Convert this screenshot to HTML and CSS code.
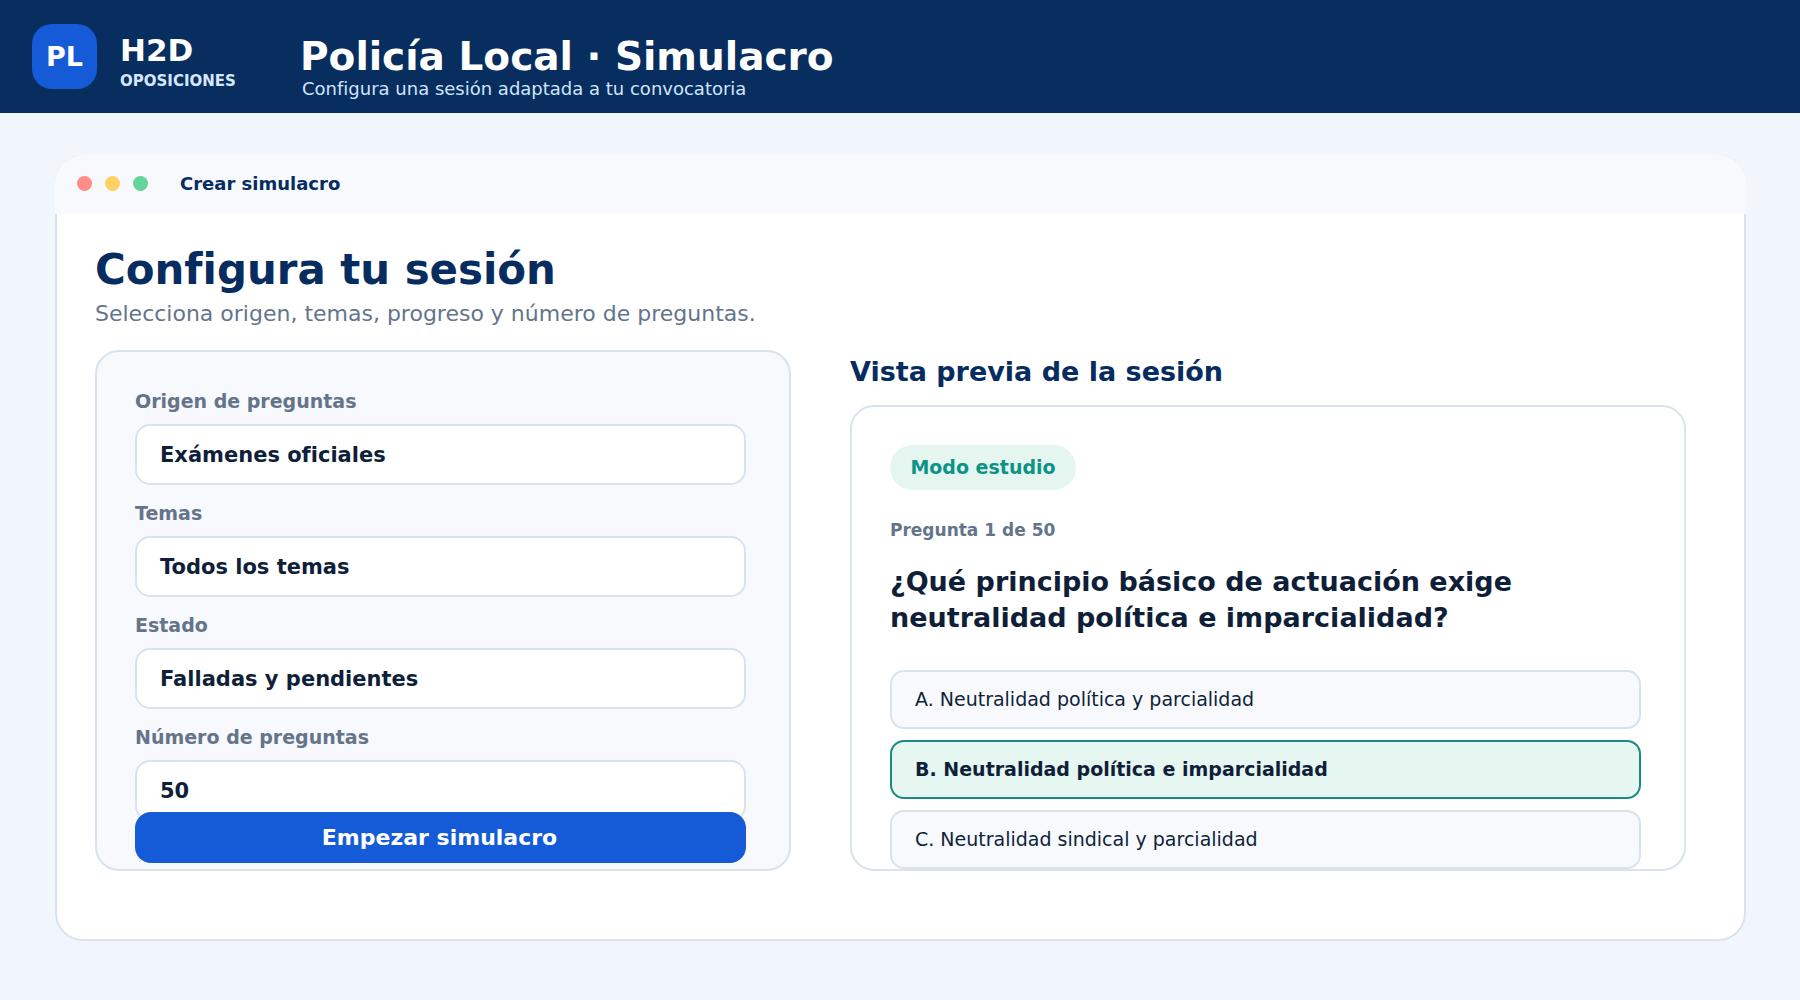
FILE: index.html
```html
<!DOCTYPE html>
<html lang="es">
<head>
  <meta charset="UTF-8">
  <title>Policía Local · Simulacro</title>
  <meta name="viewport" content="width=device-width, initial-scale=1.0">
  <link rel="stylesheet" href="styles.css">
</head>
<body>
  <header class="topbar">
    <div class="logo">PL</div>
    <div class="brand">
      <div class="brand-name">H2D</div>
      <div class="brand-sub">OPOSICIONES</div>
    </div>
    <div class="heading">
      <h1>Policía Local · Simulacro</h1>
      <p>Configura una sesión adaptada a tu convocatoria</p>
    </div>
  </header>

  <main class="window">
    <div class="titlebar">
      <span class="dot red"></span>
      <span class="dot yellow"></span>
      <span class="dot green"></span>
      <span class="titlebar-text">Crear simulacro</span>
    </div>

    <div class="content">
      <h2>Configura tu sesión</h2>
      <p class="lead">Selecciona origen, temas, progreso y número de preguntas.</p>

      <div class="columns">
        <section class="config">
          <div class="label">Origen de preguntas</div>
          <div class="field">Exámenes oficiales</div>
          <div class="label">Temas</div>
          <div class="field">Todos los temas</div>
          <div class="label">Estado</div>
          <div class="field">Falladas y pendientes</div>
          <div class="label">Número de preguntas</div>
          <div class="field">50</div>
          <button class="start">Empezar simulacro</button>
        </section>

        <section class="preview">
          <h3>Vista previa de la sesión</h3>
          <div class="card">
            <span class="chip">Modo estudio</span>
            <div class="counter">Pregunta 1 de 50</div>
            <p class="question">¿Qué principio básico de actuación exige<br>neutralidad política e imparcialidad?</p>
            <div class="option">A. Neutralidad política y parcialidad</div>
            <div class="option selected">B. Neutralidad política e imparcialidad</div>
            <div class="option">C. Neutralidad sindical y parcialidad</div>
          </div>
        </section>
      </div>
    </div>
  </main>
</body>
</html>
```

FILE: styles.css
```css
* {
  box-sizing: border-box;
}

body {
  margin: 0;
  height: 1000px;
  background: #f1f6fd;
  color: #0f1f3a;
  font-family: 'DejaVu Sans', sans-serif;
  font-variant-ligatures: common-ligatures;
  overflow: hidden;
}

h1, h2, h3, p {
  margin: 0;
}

/* header */
.topbar {
  display: flex;
  height: 113px;
  padding: 24px 32px 0;
  background: #082d5f;
  color: #fff;
}

.logo {
  width: 65px;
  height: 65px;
  border-radius: 20px;
  background: #155bd8;
  font-size: 27px;
  font-weight: bold;
  line-height: 65px;
  text-align: center;
}

.brand {
  width: 181px;
  margin-left: 23px;
  padding-top: 6px;
  font-weight: bold;
}

.brand-name {
  font-size: 31px;
  line-height: 40px;
}

.brand-sub {
  margin-top: 1px;
  font-size: 15px;
  line-height: 20px;
  color: #d6e8fc;
}

.heading {
  padding-top: 8px;
}

.heading h1 {
  margin-left: -1px;
  font-size: 39px;
  line-height: 50px;
  white-space: nowrap;
}

.heading p {
  font-size: 18px;
  line-height: 22px;
  margin-top: -4px;
  margin-left: 1px;
  color: #cfe5fc;
}

/* window frame */
.window {
  width: 1691px;
  height: 786px;
  margin: 42px 0 0 55px;
  border: 2px solid #d9e3ee;
  border-radius: 28px;
  background: #fff;
}

.titlebar {
  display: flex;
  align-items: center;
  height: 59px;
  margin: -2px -2px 0;
  padding: 0 22px 2px;
  border-radius: 28px 28px 0 0;
  background: #f7f9fd;
}

.dot {
  width: 15px;
  height: 15px;
  margin-right: 13px;
  border-radius: 50%;
}

.red { background: #ff8d85; }
.yellow { background: #ffd062; }
.green { background: #63d49a; }

.titlebar-text {
  margin-left: 19px;
  font-size: 18px;
  font-weight: bold;
  color: #072c5f;
}

.content {
  padding: 31px 38px 0;
}

h2 {
  font-size: 41.9px;
  line-height: 50px;
  color: #072c5f;
}

.lead {
  margin-top: 5px;
  font-size: 22px;
  line-height: 28px;
  color: #64748b;
}

.columns {
  display: flex;
  align-items: flex-start;
  gap: 59px;
  margin-top: 22px;
}

/* left card */
.config {
  width: 696px;
  height: 521px;
  padding: 36px 43px 0 38px;
  border: 2px solid #d9e3ee;
  border-radius: 24px;
  background: #f7f9fd;
}

.label {
  height: 36px;
  font-size: 19px;
  font-weight: bold;
  line-height: 27px;
  color: #64748b;
}

.field {
  height: 61px;
  margin-bottom: 15px;
  padding-left: 23px;
  border: 2px solid #d9e3ee;
  border-radius: 15px;
  background: #fff;
  font-size: 21px;
  font-weight: bold;
  line-height: 58px;
}

/* sits over the lower edge of the last field */
.start {
  position: relative;
  display: block;
  width: 100%;
  height: 51px;
  margin-top: -24px;
  padding: 0 2px 0 0;
  border: none;
  border-radius: 16px;
  background: #155bd8;
  color: #fff;
  font: bold 22px/50px 'DejaVu Sans', sans-serif;
}

/* right side */
h3 {
  height: 55px;
  font-size: 27px;
  line-height: 43px;
  color: #072c5f;
}

.card {
  width: 836px;
  height: 466px;
  padding: 38px 43px 0 38px;
  border: 2px solid #d9e3ee;
  border-radius: 24px;
}

.chip {
  display: block;
  width: 186px;
  height: 45px;
  border-radius: 23px;
  background: #e5f6f1;
  font-size: 19px;
  font-weight: bold;
  line-height: 45px;
  text-align: center;
  color: #0d9286;
}

.counter {
  margin-top: 30px;
  font-size: 17px;
  font-weight: bold;
  line-height: 20px;
  color: #64748b;
}

.question {
  margin: 24px 0 34px;
  font-size: 27px;
  font-weight: bold;
  line-height: 36px;
  white-space: nowrap;
}

.option {
  height: 59px;
  margin-bottom: 11px;
  padding-left: 23px;
  border: 2px solid #d9e3ee;
  border-radius: 14px;
  background: #f7f9fd;
  font-size: 19px;
  line-height: 55px;
}

.selected {
  border-color: #1a8a80;
  background: #e6f6f0;
  font-weight: bold;
}
```
